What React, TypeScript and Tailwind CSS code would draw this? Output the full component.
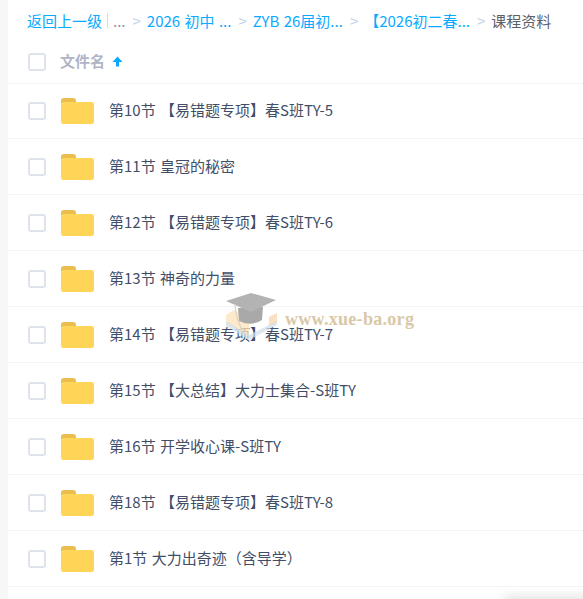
const ROWS = [
  "第10节 【易错题专项】春S班TY-5",
  "第11节 皇冠的秘密",
  "第12节 【易错题专项】春S班TY-6",
  "第13节 神奇的力量",
  "第14节 【易错题专项】春S班TY-7",
  "第15节 【大总结】大力士集合-S班TY",
  "第16节 开学收心课-S班TY",
  "第18节 【易错题专项】春S班TY-8",
  "第1节 大力出奇迹（含导学）",
];

const CRUMBS = ["2026 初中 ...", "ZYB 26届初...", "【2026初二春..."];

function FolderIcon() {
  return (
    <svg width="33" height="26" viewBox="0 0 33 26" className="block shrink-0">
      <path d="M0 3a3 3 0 0 1 3-3h9a3 3 0 0 1 3 3v2H0z" fill="#ebbd4e" />
      <rect x="0" y="4" width="33" height="22" rx="2.5" fill="#ffd558" />
    </svg>
  );
}

function Checkbox() {
  return <span className="block h-[18px] w-[18px] shrink-0 rounded-[3px] border-2 border-[#dfe4ec] bg-white" />;
}

function Separator() {
  return <span className="mr-[6px] ml-[7px] text-[#c6d4ea]">&gt;</span>;
}

function Watermark() {
  return (
    <div className="pointer-events-none absolute left-[225px] top-[293px] flex items-center">
      <svg width="56" height="52" viewBox="0 0 56 52">
        <path d="M1 22 L9 17 L24 26 L24 44 L1 30 Z" fill="#fde3b8" opacity="0.75" />
        <path d="M1 28 L24 42 L52 28 L52 32 L24 47 L1 33 Z" fill="#cfe0ea" opacity="0.7" />
        <path d="M44 24 L52 20 L52 29 L44 33 Z" fill="#f3c98d" opacity="0.55" />
        <path d="M13 15 L14 28 Q26 34 37 27 L38 14 Z" fill="#a9a9a9" />
        <path d="M1 8 L26 0 L51 7 L26 19 Z" fill="#b3b3b3" />
        <path d="M10 11 Q11 24 14 30 L18 40" fill="none" stroke="#d8d2c4" strokeWidth="1.2" />
      </svg>
      <span className="ml-[4px] font-['Liberation_Serif',serif] text-[18px] leading-none font-bold tracking-[0.3px] whitespace-nowrap text-[#d9c8a6]">
        www.xue-ba.org
      </span>
    </div>
  );
}

export default function App() {
  return (
    <div className="relative h-[599px] w-[583px] overflow-hidden bg-[#f7f7f7] pl-2 font-['Noto_Sans_CJK_SC',sans-serif] text-[15px] leading-[22px] [word-spacing:1px]">
      <div className="h-full bg-white">
        <div className="flex h-[43px] items-center pb-[2px] pl-[19px] whitespace-nowrap">
          <span className="text-[#09aaff]">返回上一级</span>
          <span className="mx-[5px] h-[15px] w-[1px] bg-[#d4deee]" />
          <span className="text-[#8f97a5]">...</span>
          <Separator />
          {CRUMBS.map((crumb) => (
            <span key={crumb} className="flex">
              <span className="text-[#09aaff]">{crumb}</span>
              <Separator />
            </span>
          ))}
          <span className="text-[#5d6069]">课程资料</span>
        </div>

        <div className="flex h-[41px] items-center border-b border-[#f2f4f7] pb-[3px] pl-5">
          <Checkbox />
          <span className="ml-[14px] mb-[1px] font-bold text-[#afb5c4]">文件名</span>
          <svg width="11" height="11" viewBox="0 0 11 11" className="ml-[7px]">
            <path d="M5.5 0.5 L10.5 6 H7 V10.5 H4 V6 H0.5 Z" fill="#09aaff" />
          </svg>
        </div>

        {ROWS.map((name, i) => (
          <div
            key={name}
            className={`flex items-center border-b border-[#f2f4fa] pl-5 ${i === 0 ? "h-[55px]" : "h-[56px]"}`}
          >
            <Checkbox />
            <span className="ml-[15px]"><FolderIcon /></span>
            <span className="mb-[2px] ml-[15px] whitespace-nowrap text-[#424e67]">{name}</span>
          </div>
        ))}
      </div>
      <Watermark />
      <div className="absolute right-[-20px] bottom-[-12px] h-[16px] w-[100px] rounded-full bg-[#e6e6e6] blur-[5px]" />
    </div>
  );
}
